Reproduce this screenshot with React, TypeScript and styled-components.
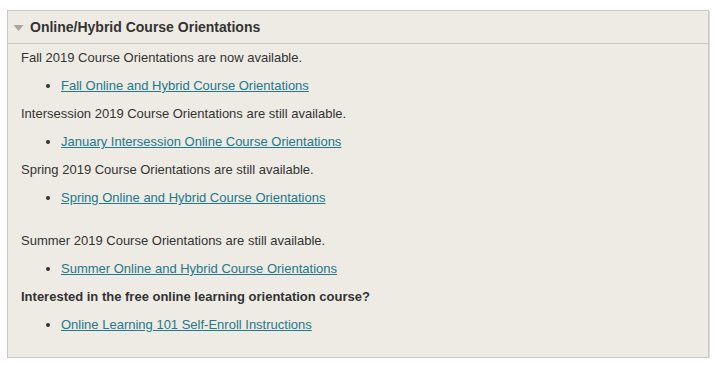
import styled, { createGlobalStyle } from "styled-components";

const GlobalStyle = createGlobalStyle`
  body {
    margin: 0;
    background: #ffffff;
    font-family: "Liberation Sans", Arial, sans-serif;
  }
`;

interface Section {
  text: string;
  link: string;
  bold?: boolean;
  spaced?: boolean;
}

const sections: Section[] = [
  {
    text: "Fall 2019 Course Orientations are now available.",
    link: "Fall Online and Hybrid Course Orientations",
  },
  {
    text: "Intersession 2019 Course Orientations are still available.",
    link: "January Intersession Online Course Orientations",
  },
  {
    text: "Spring 2019 Course Orientations are still available.",
    link: "Spring Online and Hybrid Course Orientations",
  },
  {
    text: "Summer 2019 Course Orientations are still available.",
    link: "Summer Online and Hybrid Course Orientations",
    spaced: true,
  },
  {
    text: "Interested in the free online learning orientation course?",
    link: "Online Learning 101 Self-Enroll Instructions",
    bold: true,
  },
];

export default function App() {
  return (
    <>
      <GlobalStyle />
      <Panel>
        <Header>
          <Caret viewBox="0 0 10 6" aria-hidden="true">
            <path d="M0 0 L10 0 L5 6 Z" fill="#a9a6a0" />
          </Caret>
          <Title>Online/Hybrid Course Orientations</Title>
        </Header>
        <Body>
          {sections.map((s) => (
            <div key={s.link}>
              {s.spaced && <Spacer />}
              <Line $bold={s.bold}>{s.text}</Line>
              <List>
                <li>
                  <Link href="#">{s.link}</Link>
                </li>
              </List>
            </div>
          ))}
        </Body>
      </Panel>
    </>
  );
}

const Panel = styled.div`
  margin: 10px 0 0 7px;
  width: 702px;
  height: 348px;
  box-sizing: border-box;
  background: #eeebe5;
  border: 1px solid #cbc8c3;
  box-shadow: 1px 1px 0 #dcdad5;
`;

const Header = styled.div`
  display: flex;
  align-items: center;
  gap: 6px;
  height: 32px;
  padding-left: 5px;
  border-bottom: 1px solid #c8c5c0;
`;

const Caret = styled.svg`
  width: 11px;
  height: 6px;
  margin-top: 1px;
`;

const Title = styled.h2`
  margin: 0;
  font-size: 14px;
  font-weight: bold;
  color: #333333;
`;

const Body = styled.div`
  padding: 0 0 0 13px;
  font-size: 13px;
  color: #333333;
`;

const Spacer = styled.div`
  height: 15px;
`;

const Line = styled.p<{ $bold?: boolean }>`
  margin: 0;
  line-height: 28px;
  font-weight: ${(p) => (p.$bold ? "bold" : "normal")};
`;

const List = styled.ul`
  margin: 0;
  padding-left: 40px;
  line-height: 28px;
  list-style: disc;
`;

const Link = styled.a`
  color: #23788a;
  text-decoration: underline;
`;
